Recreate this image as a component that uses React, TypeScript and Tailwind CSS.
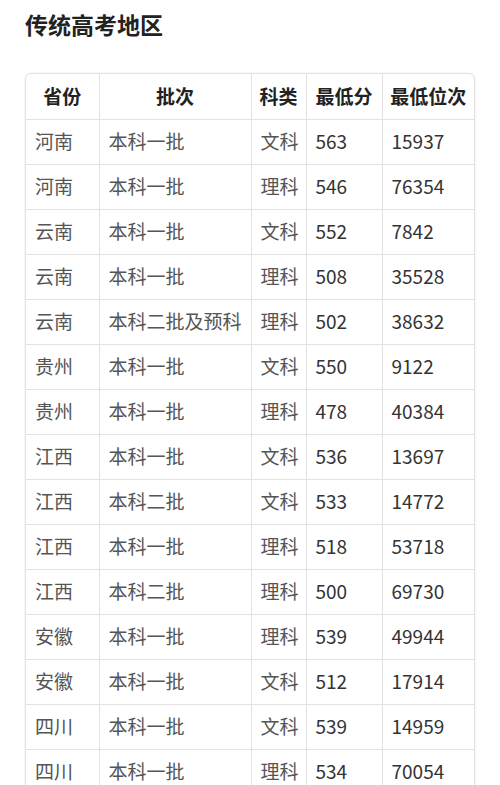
const rows: [string, string, string, string, string][] = [
	["河南", "本科一批", "文科", "563", "15937"],
	["河南", "本科一批", "理科", "546", "76354"],
	["云南", "本科一批", "文科", "552", "7842"],
	["云南", "本科一批", "理科", "508", "35528"],
	["云南", "本科二批及预科", "理科", "502", "38632"],
	["贵州", "本科一批", "文科", "550", "9122"],
	["贵州", "本科一批", "理科", "478", "40384"],
	["江西", "本科一批", "文科", "536", "13697"],
	["江西", "本科二批", "文科", "533", "14772"],
	["江西", "本科一批", "理科", "518", "53718"],
	["江西", "本科二批", "理科", "500", "69730"],
	["安徽", "本科一批", "理科", "539", "49944"],
	["安徽", "本科一批", "文科", "512", "17914"],
	["四川", "本科一批", "文科", "539", "14959"],
	["四川", "本科一批", "理科", "534", "70054"],
];

const headers = ["省份", "批次", "科类", "最低分", "最低位次"];

export default function App() {
	return (
		<div
			className="w-[500px] h-[785px] overflow-hidden bg-white"
			style={{ fontFamily: '"Noto Sans CJK SC", "Noto Sans", sans-serif' }}
		>
			<h1 className="pl-[25px] pt-[8px] text-[23px] leading-[32px] font-bold text-[#222]">
				传统高考地区
			</h1>
			<div className="ml-[25px] mt-[33px] w-[450px] rounded-t-[6px] border border-[#e2e2e2] shadow-[0_0_3px_rgba(0,0,0,0.08)] overflow-hidden">
				<table className="w-full table-fixed border-collapse">
					<colgroup>
						<col className="w-[73px]" />
						<col className="w-[152px]" />
						<col className="w-[55px]" />
						<col className="w-[76px]" />
						<col />
					</colgroup>
					<thead>
						<tr className="h-[45px]">
							{headers.map((h, i) => (
								<th
									key={h}
									className={`text-[19px] font-bold text-[#222] text-center whitespace-nowrap border-b border-[#e2e2e2] ${i > 0 ? "border-l" : ""}`}
								>
									{h}
								</th>
							))}
						</tr>
					</thead>
					<tbody>
						{rows.map((r, ri) => (
							<tr key={ri} className="h-[45px]">
								{r.map((c, ci) => (
									<td
										key={ci}
										className={`pl-[9px] text-[19px] whitespace-nowrap border-b border-[#e2e2e2] ${ci > 0 ? "border-l" : ""} ${ci >= 3 ? "text-[#333]" : "text-[#555]"}`}
									>
										{c}
									</td>
								))}
							</tr>
						))}
					</tbody>
				</table>
			</div>
		</div>
	);
}
